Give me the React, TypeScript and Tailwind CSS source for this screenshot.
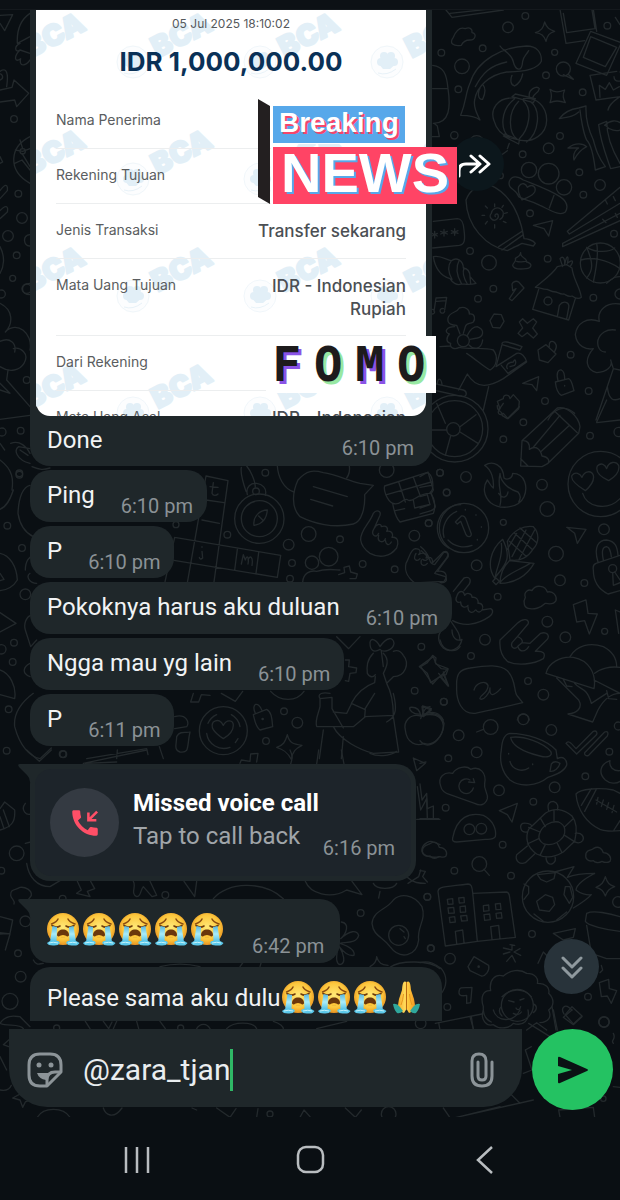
import React from 'react';

interface TextMessage {
  text: string;
  time: string;
}

interface ReceiptRow {
  label: string;
  value: string;
}

const receiptRows: ReceiptRow[] = [
  { label: 'Nama Penerima', value: '' },
  { label: 'Rekening Tujuan', value: '' },
  { label: 'Jenis Transaksi', value: 'Transfer sekarang' },
  { label: 'Mata Uang Tujuan', value: 'IDR - Indonesian Rupiah' },
  { label: 'Dari Rekening', value: '' },
  { label: 'Mata Uang Asal', value: 'IDR - Indonesian' },
];

const messages: TextMessage[] = [
  { text: 'Ping', time: '6:10 pm' },
  { text: 'P', time: '6:10 pm' },
  { text: 'Pokoknya harus aku duluan', time: '6:10 pm' },
  { text: 'Ngga mau yg lain', time: '6:10 pm' },
  { text: 'P', time: '6:11 pm' },
];

interface DoodleTile {
  x: number;
  y: number;
  dots: number[][];
  paths: string[];
}

// Each tile is drawn at 3x and scaled down, so the numbers stay whole.
const doodleTiles: DoodleTile[] = [
  {
    x: 420,
    y: 0,
    dots: [
      [316, 48, 10], [264, 82, 16], [562, 77, 10], [188, 145, 10], [64, 158, 10], [126, 199, 22], [404, 157, 9],
      [378, 226, 10], [430, 207, 21], [115, 268, 10], [488, 277, 10], [103, 406, 11], [170, 430, 23], [420, 408, 10],
      [386, 445, 16], [308, 463, 10], [478, 517, 10], [241, 527, 9], [540, 555, 16], [490, 584, 10], [330, 640, 10],
      [582, 701, 10], [150, 753, 10], [207, 788, 22], [383, 776, 10], [220, 866, 10], [174, 896, 10], [520, 893, 10],
      [452, 1064, 10], [506, 1173, 10], [375, 1203, 10], [327, 510, 23], [386, 521, 31], [432, 562, 23],
      [541, 789, 60], [384, 903, 12], [130, 1022, 18], [600, 882, 15],
    ],
    paths: [
      'M78 30 L96 52 L250 30 M90 40 L240 24',
      'M100 112 C108 92 120 80 136 86 C150 80 158 88 156 98 C172 100 166 120 150 120 C142 120 130 122 124 136 C100 140 86 130 100 112 Z',
      'M374 66 C380 84 388 88 404 94 C388 98 382 106 378 124 C372 106 364 100 346 98 C364 92 370 84 374 66 Z',
      'M420 28 L438 130 L494 122 M520 28 L530 94 M430 40 L440 98 L525 86 L516 30',
      'M512 94 L604 128 L560 226 L468 190 Z M512 110 L590 142 L556 200 L490 172 Z',
      'M510 226 L590 214 M510 226 L528 300 L600 290 M540 292 L538 256 L556 268 L568 248 L580 270 L598 260 M582 230 A14 14 0 1 0 600 216 M564 330 C568 310 586 300 600 290',
      'M586 52 L600 74',
      'M122 346 C140 300 136 280 150 250 C170 180 250 140 320 138 C350 138 366 158 364 184 C350 214 290 216 260 216 C210 224 170 258 164 300 C160 320 170 340 180 360 C166 348 140 346 122 346 Z M240 138 C250 154 276 160 280 186 C286 210 306 220 308 184 C310 170 318 166 326 152 M276 226 C270 240 272 256 284 258 C298 250 306 232 308 222 M180 264 C172 280 174 300 188 298 C196 280 198 266 190 256 M166 260 C188 220 210 196 260 186',
      'M430 224 L460 238 M446 224 L460 238',
      'M390 268 C404 280 420 276 434 270 C426 286 430 296 436 308 C420 302 406 300 390 308 C396 294 396 282 390 268 Z',
      'M284 294 C230 290 210 330 222 362 C232 400 260 414 290 418 C340 434 380 400 380 360 C380 320 350 290 310 296 M284 296 C240 330 240 390 268 412 M296 304 C260 340 268 400 290 416 M310 302 C340 330 326 390 298 416 M330 304 C366 330 356 400 320 426 M276 290 L340 308 L346 296 L286 282 Z M250 408 L296 432 L298 420 L254 402 Z M328 290 C324 268 350 256 358 266 C354 284 340 276 336 300 M268 430 L262 446 M262 452 L210 490',
      'M38 196 C70 200 80 220 84 266 C92 320 90 370 40 370 M38 266 L84 266 M42 370 L52 378 L58 410 L36 410',
      'M418 356 C436 332 460 326 476 324 L498 318 C496 360 506 390 520 420 C528 450 534 470 556 500 L526 510 C520 460 510 430 500 420 C490 400 482 350 480 330 M418 356 C450 350 460 350 476 336 M444 444 C466 426 490 430 500 440 C480 450 470 464 462 480 C458 460 466 450 476 444 L444 444 M536 374 L560 364 C560 400 570 440 600 490 M536 374 C540 420 556 460 572 506 L600 500 M554 376 C570 360 590 360 600 368 M556 376 C570 392 590 394 600 390',
      'M268 544 C276 526 292 528 310 540 C350 556 390 570 420 590 C440 604 446 620 436 636 C420 650 390 630 360 616 C330 600 310 600 296 590 C290 566 262 570 268 544 Z M296 560 C306 544 318 552 322 562 C336 550 350 560 344 576 C336 590 324 590 306 600 C300 590 292 576 296 560 Z M402 586 L388 624',
      'M138 600 C150 568 180 550 208 554 C270 580 300 640 312 716 C320 716 340 720 346 730 L340 738 L306 730 L262 752 C200 740 140 680 138 600 Z M236 740 L306 694 M246 750 L310 704 M280 742 L296 736',
      'M226 650 A5 5 0 1 1 234 644 A12 12 0 1 1 214 640 A18 18 0 1 1 240 658 M224 612 V620 M246 622 L250 616 M254 640 L262 638 M250 664 L258 668 M224 674 V684 M202 664 L196 672 M194 646 L186 646 M202 624 L196 618',
      'M40 664 L112 656 C124 656 130 664 132 690 C136 720 134 734 118 736 L38 744 M44 694 V714 M36 700 L52 708 M36 708 L52 700 M72 688 V708 M62 694 L82 702 M62 702 L82 694 M104 686 V706 M94 692 L114 700 M94 700 L114 692',
      'M340 676 L398 662 L386 708 L372 686 Z',
      'M600 562 L442 694 L448 702 L600 610 M600 640 L428 730 L428 740 L600 662 M556 600 L562 612 M580 590 L586 602 M548 658 L558 668 M586 640 L592 652',
      'M482 780 C510 770 560 776 600 806 M500 742 C530 760 570 756 584 744 M500 834 C520 810 520 790 500 742 M560 850 C580 830 590 830 600 830 M530 730 C536 760 530 800 520 846',
      'M40 770 C60 764 80 780 94 782 C110 770 130 782 130 804 C146 806 150 820 150 830 L168 850 C150 856 136 852 124 852 C110 858 96 846 90 836 C60 828 44 800 40 770 Z M94 782 C80 800 86 820 96 838 M118 780 C104 806 112 830 124 850 M132 804 C126 820 132 836 142 852 M150 830 L152 850',
      'M302 758 C300 776 320 770 320 786 C340 792 334 804 318 806 C300 808 280 806 278 796 C280 786 290 786 286 776 C290 770 300 772 302 758 Z M290 784 C300 788 310 784 318 784',
      'M346 862 C380 834 400 820 412 800 L440 794 L456 804 C460 840 480 860 484 892 C474 900 462 892 456 888 C446 892 440 886 432 882 C420 884 416 878 408 876 C396 876 390 872 382 868 C370 870 360 862 346 862 Z M356 868 L338 928 L446 960 L466 896 M412 950 L418 916 C430 900 450 906 446 924 L440 956 M428 800 L420 776 C430 764 436 780 434 794 M434 794 C440 760 448 768 442 790 C460 776 462 784 450 800',
      'M48 894 L80 892 L74 930 M48 894 L42 934 M50 904 L78 902 M42 930 A7 7 0 1 0 44 936 M70 926 A7 7 0 1 0 74 934',
      'M276 852 A14 14 0 0 1 296 846 L312 864 L276 902 L268 896 L288 866 L278 872 Z',
      'M210 962 L222 942 L244 944 L252 964 L240 984 L218 982 Z',
      'M298 966 L308 956 L322 970 L340 956 L350 966 L338 984 L352 1002 L340 1014 L322 998 L306 1010 L294 1000 L308 984 Z',
      'M84 954 C90 934 110 940 118 924 C136 918 150 930 148 942 C166 940 166 958 160 966 C150 974 140 966 136 980 L130 1000 M84 954 C80 974 100 976 110 976 L120 1002 M104 980 C80 980 70 996 88 1002 C76 1016 80 1028 92 1030 C88 1044 104 1050 118 1042 M142 1006 C150 990 160 980 172 980 C196 990 190 1010 172 1014 L150 1018 M146 1034 C160 1050 184 1050 188 1020 M60 1040 L90 1038 M118 1042 C150 1050 190 1040 220 1050 C236 1070 230 1100 210 1110 C190 1100 170 1080 140 1060',
      'M246 1030 C250 1022 260 1024 306 1040 L300 1050 L246 1034 M246 1034 L228 1100 M228 1100 L290 1060 C304 1056 316 1070 320 1086 L250 1136 C210 1160 170 1170 142 1122 L116 1170 M206 1160 L190 1230 M262 1106 C256 1096 266 1086 280 1086 C286 1070 290 1090 284 1096 L270 1100 M244 1096 L264 1120 L318 1084',
      'M354 1050 L378 1034 L408 1062 L384 1088 L358 1080 Z M388 1040 C386 1020 402 1020 408 1034 C412 1042 406 1050 404 1054',
      'M406 1146 L446 1136 C456 1140 458 1160 462 1172 L424 1186 C412 1180 408 1164 406 1146 Z M414 1142 C408 1120 414 1108 424 1110 C434 1114 434 1130 434 1138 M434 1156 V1158',
      'M308 1150 L356 1130 L350 1172 L336 1154 Z',
      'M232 1204 L250 1196 C250 1182 268 1182 270 1196 L280 1184 L298 1204 L296 1226 L264 1256 L250 1240 C236 1250 230 1236 240 1226 Z',
      'M600 912 C560 906 530 930 538 964 C500 950 470 970 466 1004 C470 1040 500 1050 520 1046 C490 1080 500 1110 530 1118 C560 1116 580 1100 572 1080 L580 1106 L600 1110 M586 990 C560 986 540 1000 534 1020 C530 1040 540 1056 556 1056 M580 1106 L528 1260 M562 1160 C566 1200 580 1204 600 1196',
      'M40 1150 L130 1170 C142 1174 142 1190 128 1190 L40 1170 M52 1150 C54 1130 64 1136 66 1154',
      'M384 1260 C400 1230 430 1210 464 1240',
    ],
  },
  {
    x: 420,
    y: 400,
    dots: [
      [310, 67, 10], [250, 118, 10], [510, 107, 10], [100, 88, 20], [104, 86, 84], [104, 86, 100], [60, 218, 10], [138, 231, 16],
      [80, 278, 10], [366, 254, 16], [382, 327, 22], [26, 370, 10], [250, 367, 9], [552, 388, 16], [132, 384, 74], [408, 461, 22],
      [170, 496, 16], [420, 541, 16], [493, 549, 10], [233, 590, 10], [382, 665, 16], [554, 694, 9], [436, 712, 16],
      [195, 719, 16], [153, 768, 10], [324, 843, 10], [370, 884, 16], [71, 905, 10], [542, 252, 98], [596, 96, 14], [578, 506, 12],
    ],
    paths: [
      'M76 70 L50 10 M120 80 L168 44 M120 96 L174 130 M92 108 L76 166 M80 90 L36 90',
      'M306 122 L412 24 C440 16 476 50 480 80 L476 100 L384 190 L366 200 L302 198 Z M306 122 C322 120 330 130 328 148 C350 134 362 150 366 168 C384 170 390 182 384 190 M338 144 L420 46 M364 154 L446 78 M404 34 L472 98 M302 176 L324 198',
      'M194 196 C220 180 250 196 252 234 C260 240 276 238 278 220 C316 220 324 262 312 290 C296 326 240 330 212 308 C190 288 188 260 202 240 C210 250 214 262 220 264 C222 240 216 210 194 196 Z M240 220 C240 246 270 270 294 276 C306 290 300 300 296 306 M240 222 C230 260 250 280 240 316 M236 280 C250 300 262 290 264 276',
      'M72 412 A66 66 0 0 1 110 334 M84 420 A66 66 0 0 0 156 436 M136 328 V330 M168 344 V346 M184 380 V382 M172 418 V420 M106 366 L124 348 C132 346 136 352 138 358 L154 402 C154 412 142 412 138 404 L122 364 L112 372 Z',
      'M262 424 C280 390 310 376 340 380 C360 400 356 430 340 446 C326 470 300 486 270 480 Z M284 400 L336 448 M268 424 L320 470 M300 384 L350 428 M276 470 L318 390 M296 480 L344 390 M262 448 L290 400 M248 418 C210 450 200 500 224 534 C250 500 280 480 248 418 Z M268 482 L342 490 C320 530 280 550 240 550 C240 520 250 500 268 482 Z M218 544 L228 534 L238 544 L228 554 Z M244 430 C250 470 230 500 226 530 M330 490 C300 510 260 520 240 548',
      'M440 382 L498 388 L472 430 L464 400 Z',
      'M496 272 C470 256 450 240 456 226 C466 214 480 220 486 232 C494 212 514 210 520 226 C524 244 510 260 496 272 Z M566 242 C540 230 526 214 532 198 C544 186 556 194 560 206 C566 184 588 182 596 196 C600 214 586 230 566 242 Z M488 280 C500 320 560 336 600 296',
      'M528 490 L600 466 M520 510 C520 550 540 570 564 582 L600 572 M520 510 C518 498 522 492 528 490 M534 486 C520 440 536 420 560 420 C586 424 592 440 594 466 M550 480 C544 452 548 440 560 440 C570 442 572 456 574 470 M578 518 L580 556 L600 548 M584 516 L600 540',
      'M316 592 C310 576 326 566 336 572 C346 552 376 556 382 576 C400 572 412 588 408 602 C400 616 386 612 376 610 C360 626 340 628 330 626 C312 626 308 606 316 592 Z',
      'M460 614 L498 600 L504 640 L532 642 L508 702 L494 662 L470 666 Z',
      'M2 440 C40 470 20 490 44 494 L72 456 C88 456 88 470 80 476 L52 514 C80 510 84 530 72 544 L0 548 M4 452 L26 472 C26 480 14 484 8 478',
      'M100 574 L132 534 C150 528 154 540 148 552 L132 572 M110 590 C116 570 130 570 134 586 C140 576 156 580 156 592 C170 590 176 600 174 610 C186 608 192 620 186 630 L212 626 C222 630 218 644 208 650 C170 676 130 680 98 662 M110 590 C104 602 112 610 122 606 M122 606 C122 622 136 626 144 616 M144 620 C144 638 158 642 166 630 M168 630 C174 640 182 636 186 630',
      'M240 720 L292 670 C310 652 330 658 324 672 L292 710 C300 712 310 720 306 728 L330 730 L362 700 C380 694 390 706 382 718 L346 754 C370 752 378 760 370 776 C340 794 290 798 262 784 C242 766 238 744 240 720 Z M292 710 L276 728 C270 744 286 750 294 738 L306 728 M294 740 C300 758 316 756 326 740',
      'M96 690 C96 712 110 726 126 718 C120 748 90 760 70 744 C52 726 52 704 66 690',
      'M586 630 L600 636 M586 630 L596 700',
      'M2 800 L22 788 L38 766 L48 774 L46 788 L64 806 L84 808 L78 824 L56 832 L38 852 Z M60 830 L84 858 L72 826',
      'M110 860 C108 820 120 808 150 804 C200 796 240 792 262 812 C290 840 280 876 292 888 L308 908 C260 920 210 930 166 940 C124 944 108 900 110 860 Z M162 870 C168 848 196 840 204 856 C206 880 176 886 180 896 C190 904 210 878 210 864 C208 890 220 890 242 866',
      'M378 820 C384 790 420 768 460 772 C506 780 530 820 522 866 Z M450 770 C470 736 510 726 550 740 C580 756 590 780 590 800 M524 820 C540 806 570 798 600 802 M522 840 L600 880 M410 834 L476 900 C490 924 470 940 444 942 L518 966 L534 930 C550 900 570 880 600 880 M430 838 L440 858 L456 860 M464 850 C480 870 500 860 514 910 L560 880 M560 872 L566 896 L590 898',
      'M6 920 L34 930 L10 950 Z M10 944 C40 930 60 940 70 960 M292 960 A18 18 0 0 1 328 960',
      'M236 30 L250 10 M232 16 C230 40 250 30 246 46 L262 56 L298 20 M530 66 L560 0 M530 68 L600 60',
      'M0 230 L24 216 L40 270 L34 280 L46 320 C40 336 20 334 0 342 M0 262 L34 256 M0 290 L22 284 L30 314 L0 324',
    ],
  },
  {
    x: 420,
    y: 700,
    dots: [
      [310, 58, 16], [116, 106, 16], [212, 81, 22], [394, 90, 16], [170, 157, 16], [85, 175, 10], [568, 155, 10], [496, 229, 10],
      [237, 271, 16], [404, 262, 16], [340, 305, 10], [77, 323, 10], [248, 434, 10], [178, 492, 22], [103, 512, 10], [273, 527, 10],
      [22, 591, 10], [336, 702, 10], [33, 745, 10], [90, 776, 16], [82, 921, 10], [504, 890, 10], [552, 966, 16], [148, 388, 16],
      [184, 386, 16], [384, 590, 77], [292, 916, 48], [595, 78, 12], [594, 606, 16], [176, 800, 2],
    ],
    paths: [
      'M170 96 L190 88 M192 508 L208 526',
      'M4 50 C20 40 60 30 72 70 C70 110 40 140 16 134 C4 130 0 122 0 122 M12 46 L8 18 L34 26 L12 46',
      'M244 150 C246 116 254 102 270 100 C320 100 380 120 408 150 L412 176 C430 166 442 180 440 196 C430 220 400 226 384 232 C350 260 300 262 270 240 C244 216 238 180 244 150 Z M272 112 C310 106 370 128 392 154 C400 170 380 174 360 168 C320 158 276 140 272 112 Z M266 160 V162 M338 192 V194 M270 184 C276 212 310 216 326 204 M394 192 C400 184 410 184 420 190 C416 204 404 216 390 214 Z',
      'M438 130 C444 122 450 124 468 146 L520 94 C530 90 534 100 528 106 L470 162 Z M494 158 L554 96 C564 92 566 100 562 108 L506 166 C498 170 492 164 494 158 Z',
      'M570 182 C540 192 534 220 556 240 C570 252 590 252 600 244 M570 182 C566 200 580 214 600 212',
      'M62 258 C52 230 74 214 98 220 C110 200 140 196 152 208 C180 196 200 220 194 250 C190 270 206 280 202 296 C196 316 180 318 164 310 L90 284 C70 278 64 270 62 258 Z M150 240 A22 22 0 1 0 160 264 M146 246 L164 248 L160 236',
      'M238 332 L292 310 L276 366 L262 344 Z',
      'M98 414 C110 350 150 336 190 346 C220 360 230 390 226 410 C220 420 210 418 196 418 L110 426 C100 426 96 422 98 414 Z',
      'M326 388 L376 340 C400 322 430 326 456 348 C474 370 470 400 464 424 L430 456 C400 474 376 476 350 462 C318 440 316 410 326 388 Z M358 402 C366 376 394 362 416 366 C440 376 436 400 430 410 C414 432 390 436 372 432 C358 424 354 414 358 402 Z M386 332 C380 310 390 304 400 304 C414 308 416 320 412 330 M322 396 C300 400 298 376 308 370 C320 368 332 372 336 378 M466 400 C486 396 494 412 488 422 C480 432 468 428 462 424 M322 438 L290 464 C284 484 300 494 316 488 L344 462 M378 470 C378 490 388 494 396 492 C406 486 408 476 404 468 M362 356 L376 380 M402 330 L402 362 M458 358 L434 380 M462 424 L434 406 M426 458 L412 430 M360 466 L376 434 M322 432 L356 416 M326 382 L360 396',
      'M468 282 C480 266 540 262 580 270 L600 280 M468 282 C472 330 500 370 540 388 C560 396 580 394 600 392 M484 316 L514 266 M494 334 L530 266 M528 300 L590 336 M534 292 L530 312 M550 300 L544 320 M566 308 L560 328 M582 316 L576 338 M582 390 L600 362',
      'M8 446 C14 432 26 436 32 430 C46 420 56 432 58 442 C74 442 84 456 78 468 C70 476 60 468 56 470 C46 478 36 474 30 468 C14 472 4 462 8 446 Z',
      'M498 460 C504 446 516 452 520 446 C536 436 546 446 550 458 C566 458 576 472 570 484 C560 490 550 486 546 484 C536 490 524 488 520 482 C504 486 494 476 498 460 Z',
      'M376 584 L398 592 L404 614 L388 634 L358 630 L350 604 Z M352 524 L406 518 L402 536 L380 546 L362 538 Z M436 560 L432 584 L448 610 L458 592 L450 560 Z M312 552 L326 560 L326 580 L312 598 M342 642 L370 664 M440 636 L410 660 M404 516 L462 500 L442 532 C470 520 500 520 524 520 C500 534 470 550 468 570 C480 580 500 586 514 584 C500 600 480 612 460 624',
      'M556 530 C562 550 568 554 584 560 C568 566 562 572 556 588 C550 572 544 566 528 562 C546 554 550 548 556 530 Z',
      'M76 738 L54 574 C56 560 64 562 144 552 C154 552 156 560 158 578 L172 724 Z M158 580 L260 576 C270 578 268 590 270 600 L286 712 L172 724 M110 730 L106 694 L128 690 L132 728 M216 718 L212 680 L236 676 L240 716 M82 598 L98 596 L99 612 L84 613 Z M116 594 L132 592 L133 608 L118 609 Z M84 624 L101 622 L103 639 L86 640 Z M120 620 L136 618 L137 636 L121 637 Z M88 652 L104 650 L106 666 L90 668 Z M122 648 L140 646 L142 662 L125 663 Z M190 617 L206 615 L207 632 L191 634 Z M226 612 L241 610 L243 628 L228 629 Z M192 644 L209 642 L211 659 L194 661 Z M228 640 L244 638 L246 654 L230 655 Z',
      'M276 734 L276 750 L250 744 M300 746 L282 756 L302 766 M286 786 L276 766 L260 784 M250 762 L270 756 M270 734 L284 736',
      'M144 800 L162 770 L206 796 C210 812 196 830 184 828 L150 812 Z',
      'M118 870 C120 860 130 864 156 862 L152 908 L140 910 L140 886 C120 890 114 884 118 870 Z',
      'M190 920 C180 890 190 870 212 872 C206 840 226 820 250 828 C270 810 300 806 320 820 C346 820 356 836 352 850 C380 850 390 866 386 880 C406 900 400 920 386 930 C396 950 386 966 360 968 M190 920 C188 950 200 960 214 966 M244 920 C236 926 236 940 246 948 M340 912 C352 916 352 930 340 938 M246 890 C270 866 310 862 334 890 M266 902 L282 906 M300 900 L312 896 M288 924 C292 932 300 930 302 920 M280 940 C290 946 300 944 304 936',
      'M500 640 C520 630 570 640 600 650 M500 640 L496 664 C500 676 560 690 600 694 M500 676 L514 760 L560 776 L600 776',
      'M400 700 L466 686 L460 712 L430 720 Z M354 790 L370 756 L384 770 M544 796 L548 810 L540 818',
      'M538 848 L566 838 L568 866 L590 872 L574 910 L562 888 L544 890 Z',
      'M456 920 L486 948 L460 972 L436 944 Z M432 942 C420 922 436 914 446 922 L456 930',
      'M0 252 L6 300 L20 280 L22 326 L40 318 L40 354 M0 356 H56 M0 190 L18 186 M0 512 L16 514 L8 530 L22 546 M0 788 C30 780 50 796 64 806 C84 830 80 860 64 880',
      'M46 970 L186 942 M154 950 L160 990 M60 990 L56 968 M396 920 L408 990 M320 990 L350 968 L380 990',
    ],
  },
  {
    x: 0,
    y: 460,
    dots: [
      [58, 44, 10], [796, 38, 10], [768, 94, 10], [778, 176, 74], [778, 176, 54], [1160, 30, 22], [1320, 38, 10], [1340, 97, 10],
      [22, 197, 10], [682, 224, 10], [926, 222, 22], [866, 254, 16], [1020, 238, 10], [1243, 227, 16], [1286, 189, 10],
      [66, 264, 10], [876, 309, 10], [986, 290, 28], [936, 308, 20], [1088, 312, 10], [1184, 328, 10], [76, 403, 16],
      [528, 194, 9], [870, 356, 10], [42, 548, 10], [38, 606, 10], [26, 748, 10], [4, 568, 14], [1264, 560, 10], [1244, 692, 10],
      [1332, 725, 10], [670, 812, 72], [852, 754, 10], [892, 788, 16], [798, 843, 10], [190, 883, 10], [20, 872, 10], [788, 777, 2],
    ],
    paths: [
      'M618 48 L684 62 L640 380 M618 48 L560 380 M618 120 L672 128 M606 180 L658 190 M524 232 L842 286 L832 352 L490 296 M524 232 L494 370 M712 268 L704 330 M776 278 L768 340 M640 68 L636 100 C640 110 650 106 654 102 M630 80 L654 82 M606 260 V262 M606 274 L608 294 C602 300 598 296 598 292 M724 312 L730 284 L736 300 C740 284 748 290 744 312 M744 300 C750 284 760 290 756 316',
      'M738 94 C730 70 720 40 724 22 M766 82 C766 60 750 30 740 18 M742 104 C736 80 754 68 770 70 C786 72 802 84 796 106 M762 196 C758 170 780 150 802 150 C800 176 790 192 762 196 Z M776 168 L788 180',
      'M894 60 C920 30 940 30 970 38 C1010 44 1040 60 1080 70 L1120 76 L1094 104 C1096 140 1086 186 1060 192 C1000 206 940 190 900 170 C870 140 880 90 894 60 Z M940 80 L1042 110 M932 118 L998 138',
      'M832 18 C834 50 850 86 882 96 M1040 54 C1050 40 1050 30 1048 18',
      'M1154 78 L1280 38 C1300 40 1304 90 1290 98 C1310 120 1304 150 1300 160 L1200 186 C1184 170 1180 140 1178 130 C1160 120 1150 90 1154 78 Z M1160 104 L1294 66 M1196 66 L1216 126 M1240 52 L1260 106 M1180 130 C1200 140 1210 110 1224 120 C1240 130 1250 100 1290 100 M1186 152 L1214 146 M1240 120 L1244 144 L1286 134',
      'M1382 134 A70 70 0 0 0 1346 264',
      'M1082 240 C1080 210 1110 190 1120 160 C1130 146 1144 154 1140 166 L1122 206 C1130 190 1144 190 1144 200 C1160 194 1166 206 1160 214 C1178 210 1180 226 1176 232 C1196 230 1196 250 1190 264 C1170 290 1140 296 1110 280 C1090 266 1084 256 1082 240 Z M1122 206 C1110 226 1130 236 1136 220 M1136 226 C1130 246 1150 252 1156 236 M1156 240 C1158 256 1168 258 1174 246',
      'M1218 310 C1230 290 1230 270 1246 266 C1264 266 1262 280 1256 284 C1270 274 1284 282 1278 294 C1296 288 1300 300 1296 310 L1330 276 C1344 270 1348 284 1340 294 L1304 340 L1336 350 C1344 362 1336 370 1320 368 M1218 310 C1212 334 1226 356 1246 370 M1248 280 C1236 300 1252 306 1260 296 M1264 300 C1260 318 1274 320 1282 310',
      'M908 366 C910 340 930 330 950 334 C980 324 1010 330 1020 330 M1016 344 L1034 338 L1032 322 L1048 318 L1052 336 L1072 342 L1068 356 L1050 356',
      'M40 90 C30 120 20 140 0 148 M0 0 C40 30 40 60 36 90 M54 160 C56 110 70 80 90 76 M54 160 C60 200 80 220 100 230 M76 330 C76 300 90 290 96 290 M90 340 C76 350 90 370 110 370',
      'M0 280 C30 286 50 320 52 360 C40 380 20 390 0 392 M0 340 L12 358 L0 362 M0 458 L48 490 L0 516 M0 630 C30 640 50 680 44 716 L0 704 M76 510 C70 490 80 470 92 466 M76 510 L92 560 L110 540 M90 610 C70 620 64 640 90 650 M100 700 C60 730 40 760 44 800 C60 860 90 890 120 896 L154 864',
      'M1120 580 C1100 600 1100 620 1102 640 C1112 656 1120 650 1126 644 M1110 548 C1112 530 1130 540 1140 560 C1160 530 1180 530 1182 550 C1180 570 1150 580 1140 568 C1120 580 1110 570 1110 548 Z M1150 580 C1170 600 1160 620 1150 640 L1160 670 L1180 650 C1216 650 1230 610 1210 586 C1200 570 1190 570 1180 574 M1144 574 L1150 620 M1126 650 L1124 668 C1090 680 1070 700 1054 730 L1094 748 L1124 700 M1160 670 C1176 700 1180 730 1180 766 L1094 770 L1096 748 M1054 732 L1040 760 L1000 756 M1096 770 L1060 800 L950 800 C944 780 956 760 960 740 L960 716 L996 712 L996 746 L1030 804 M960 716 C950 700 970 696 990 700 M1180 700 C1190 740 1192 770 1160 786 M1000 800 C1020 840 1080 870 1120 880 L1196 876 L1180 770 M970 810 L958 896 M1030 830 L1024 896',
      'M1258 620 L1300 590 L1308 612 L1344 626 L1320 650 L1292 668 L1282 640 Z M1316 640 L1346 678 L1330 636',
      'M1262 768 C1230 760 1210 784 1216 810 C1220 850 1250 860 1272 850 C1300 860 1330 830 1330 796 C1326 764 1296 758 1262 768 Z M1262 776 C1270 750 1280 740 1290 740 M1260 762 C1240 764 1226 750 1230 742 C1250 740 1260 750 1262 768',
      'M670 836 C640 816 630 800 640 786 C654 776 664 784 670 796 C680 776 700 780 700 796 C700 816 684 828 670 836 Z M624 790 A52 52 0 0 1 650 764 M694 764 A52 52 0 0 1 720 800 M620 820 A52 52 0 0 0 690 862 M714 836 L706 848',
      'M760 764 L800 748 C816 756 816 780 818 800 L780 810 C766 800 764 780 760 764 Z M766 760 C752 730 776 722 786 752',
      'M862 824 C868 850 880 852 906 856 C886 866 878 874 874 898 C862 876 850 868 830 862 C850 856 856 846 862 824 Z',
      'M524 770 C560 760 570 790 560 800 L524 806 M530 830 C540 810 560 820 570 816 C560 860 570 880 540 876 C520 870 530 850 530 830 M478 860 L490 896 M260 896 L440 866 L444 884 M350 896 L352 870',
      'M580 700 L572 726 L596 726 L604 704 L630 706 M664 700 L706 724 L728 694 M812 694 C840 726 890 726 912 694 M1010 530 L1046 566 L1080 530 M1036 600 L1048 600 L1046 620 L1070 624 L1068 638 L1050 640 L1046 664 L1036 662 M1320 540 C1330 580 1370 576 1380 560 M1350 480 C1370 510 1380 520 1380 540',
    ],
  },
  {
    x: 0,
    y: 750,
    dots: [
      [188, 12, 10], [50, 310, 22], [4, 362, 10], [62, 680, 16], [30, 754, 24], [54, 610, 10], [496, 435, 10], [188, 446, 10],
      [1082, 489, 10], [1282, 440, 10], [1292, 595, 10], [1196, 556, 30], [76, 514, 16],
    ],
    paths: [
      'M80 0 L118 34 L154 0 M250 40 L440 0 M256 40 L350 36 M720 40 L724 30 L750 34 L752 12 L774 10 L770 36 M870 0 C880 20 876 30 872 42 M956 0 L950 42 M1024 0 L1032 42 M1110 10 C1130 20 1170 20 1190 4 M1240 24 L1276 40 L1250 62 Z',
      'M1252 110 L1262 180 L1280 146 L1282 204 M1250 208 H1320 M1266 296 C1270 280 1290 270 1300 276 L1320 284 M1266 296 C1262 316 1290 326 1320 320',
      'M0 240 C40 230 46 210 44 180 L14 156 L0 176 M10 180 L28 230 M0 200 L12 236 M76 160 C60 180 80 200 96 190 M80 340 C86 380 110 410 150 410 L180 392 M76 280 L92 276',
      'M32 436 C30 416 50 420 60 412 C76 410 96 420 94 436 C90 444 84 448 80 456 M32 436 C34 448 46 450 42 462',
      'M232 394 L244 420 L230 430 L270 440 L262 424 L284 416 L272 394 M400 394 C410 410 390 430 410 440 C424 440 420 420 430 410 L456 440 L470 436 L450 394 M552 394 L584 440 L590 394 M640 446 C680 396 790 390 850 446',
      'M916 394 C930 430 990 450 1040 420 L1086 434 L1056 394 M1120 400 C1130 420 1180 420 1190 400 M1140 424 L1136 444 M1220 380 C1240 400 1260 400 1276 400 M1224 400 L1256 380 L1262 360',
      'M1180 450 C1200 430 1240 430 1266 470 C1280 510 1250 530 1256 570 C1250 620 1200 630 1170 590 C1150 560 1120 560 1116 520 C1120 480 1160 480 1180 450 Z M1200 536 L1212 546 M1212 560 L1216 566',
      'M1024 516 C1050 520 1040 550 1022 566 C1050 540 1070 540 1076 556 C1070 580 1040 576 1020 580 C1050 590 1066 600 1062 616 C1040 620 1026 600 1018 590 C1030 610 1040 640 1020 644 C1006 640 1010 620 1012 600',
      'M1130 620 C1136 640 1144 644 1164 646 M1130 620 C1130 636 1120 644 1110 650 M1170 652 C1200 630 1290 630 1320 656',
      'M0 500 L38 510 L30 550 L0 552 M0 548 L30 552 L16 600 M0 820 C20 790 50 800 60 800 L90 830 M100 630 C110 650 120 640 130 640 M480 650 C520 640 560 640 600 650 M720 650 L730 636 M780 650 L784 636',
    ],
  },
  {
    x: 0,
    y: 0,
    dots: [
      [42, 357, 10], [55, 581, 10], [66, 654, 16], [24, 708, 16], [50, 766, 10], [38, 835, 9], [80, 866, 14], [80, 1140, 10],
      [62, 1292, 10], [6, 1296, 12], [58, 1420, 10], [4, 882, 12], [68, 454, 8],
    ],
    paths: [
      'M0 46 L38 44 L14 92 L0 70 M90 40 C60 60 50 90 52 130 L90 110 M60 130 C40 140 46 160 60 150 C40 170 44 190 62 176 C56 200 76 200 90 180 M60 150 L90 160',
      'M0 214 C20 200 26 220 20 260 M0 270 L36 262 L42 240 L86 280 L50 320 L44 300 L0 306 M0 240 C14 236 6 220 0 222',
      'M90 410 C30 440 20 510 90 550 M46 450 L68 454 L90 446 M66 460 L90 500 M60 420 L68 446 M44 490 L66 480 L90 510',
      'M0 572 C16 550 24 552 22 572 L0 596 M0 632 C16 614 26 616 22 636 L0 656 M0 470 L8 486 L0 490 M90 704 C66 704 70 740 90 738 M0 740 C16 770 12 800 0 820',
      'M90 850 C60 850 60 884 90 884 M0 910 C40 930 40 970 16 996 C50 960 100 1000 90 1050 M0 1024 C30 1010 50 1030 44 1056 M0 1100 C30 1120 60 1110 72 1090 C90 1060 60 1040 40 1046 M24 1110 L20 1140 L90 1220 M0 1170 L30 1180 L0 1150 M0 1258 L90 1246 M32 1330 C60 1320 80 1340 90 1360 M90 1390 C50 1380 40 1350 56 1340 L90 1346 M60 1350 L84 1366 M96 1400 C120 1410 130 1410 150 1404 M0 1330 L14 1350',
    ],
  },
  {
    x: 0,
    y: 1010,
    dots: [[170, 54, 9], [542, 54, 9], [810, 312, 9], [1262, 40, 16], [1812, 36, 15], [1166, 312, 22], [1810, 266, 8]],
    paths: [
      'M0 40 C20 50 60 40 70 56 M26 90 L10 104 L26 110 M0 140 L20 180 M0 240 C20 244 30 236 34 226 M60 230 L64 250 L38 264 L60 270 L68 292 L76 276 L92 270 M112 322 C130 290 190 290 210 322 M310 294 C316 314 340 330 366 294 M576 294 L590 300 M650 294 L690 322 L708 296 M770 322 L774 296 M900 322 L912 300 L930 320',
      'M256 34 L270 56 M310 34 L326 56 L336 36 M340 56 L350 34 M410 34 L416 56 M480 34 L496 56 M590 56 C600 40 620 38 630 56 M680 56 C700 34 760 34 770 56 M820 34 C840 40 850 50 850 56 M950 56 L1040 34 M1036 294 L1066 322 L1084 300 M1330 294 L1352 326 L1600 270 M1370 322 L1500 290 M1520 240 L1560 280',
      'M1410 20 L1420 56 M1450 0 C1440 30 1460 50 1480 44 C1500 60 1530 54 1540 40 C1570 50 1590 30 1584 0 M1480 0 C1490 36 1540 40 1560 0 M1586 40 L1650 80 M1660 0 L1672 60 M1690 22 L1716 0 M1690 22 L1720 44 L1746 20 M1576 120 L1596 180 L1570 190 M1576 120 L1594 110 M1840 70 C1850 90 1830 90 1840 100 M1840 230 L1860 232 M1680 322 L1676 300 L1780 292 L1784 322',
    ],
  },
];

function Wallpaper() {
  return (
    <svg
      className="absolute inset-x-0 top-[9px] -z-10 h-[1108px] w-full"
      viewBox="0 9 620 1108"
      preserveAspectRatio="xMidYMin slice"
      fill="none"
      stroke="#23292c"
      strokeWidth="4"
      strokeLinecap="round"
      strokeLinejoin="round"
      aria-hidden="true"
    >
      {doodleTiles.map((tile, tileIdx) => (
        <g key={tileIdx} transform={`translate(${tile.x} ${tile.y}) scale(0.33333)`}>
          {tile.dots.map(([cx, cy, r], idx) => (
            <circle key={idx} cx={cx} cy={cy} r={r} />
          ))}
          {tile.paths.map((d, idx) => (
            <path key={idx} d={d} />
          ))}
        </g>
      ))}
    </svg>
  );
}

function EmojiDefs() {
  return (
    <svg className="absolute h-0 w-0" aria-hidden="true">
      <defs>
        <radialGradient id="face" cx="50%" cy="45%" r="55%">
          <stop offset="0" stopColor="#ffe978" />
          <stop offset="0.7" stopColor="#fcc63c" />
          <stop offset="1" stopColor="#e89322" />
        </radialGradient>
        <linearGradient id="tear" x1="0" y1="0" x2="0" y2="1">
          <stop offset="0" stopColor="#58b6dc" />
          <stop offset="0.5" stopColor="#a9ecfa" />
          <stop offset="1" stopColor="#4fbfe6" />
        </linearGradient>
        <linearGradient id="hands" x1="0" y1="0" x2="1" y2="0">
          <stop offset="0" stopColor="#f4a21f" />
          <stop offset="0.4" stopColor="#ffd95a" />
          <stop offset="0.6" stopColor="#ffc83d" />
          <stop offset="1" stopColor="#ef8f1c" />
        </linearGradient>
      </defs>
    </svg>
  );
}

function SobEmoji() {
  return (
    <svg className="h-9 w-9 shrink-0" viewBox="0 0 36 36" role="img" aria-label="loudly crying face">
      <circle cx="17" cy="17" r="16" fill="url(#face)" />
      <path d="M5.5 12 C8 11 11 9.5 12 7 M29 12 C26 11 23 9.5 22 7" stroke="#8a4b10" strokeWidth="1.5" fill="none" strokeLinecap="round" />
      <path d="M6 13.5 Q10 16.5 14 14 M20 14 Q24 16.5 28 13.5" stroke="#6d3a0c" strokeWidth="1.6" fill="none" strokeLinecap="round" />
      <path d="M11 23 C11 15.5 23 15.5 23 23 C23 26 11 26 11 23 Z" fill="#6b370c" />
      <path d="M12.5 24.5 Q17 21.5 21.5 24.5 Q17 27 12.5 24.5 Z" fill="#ffc73b" />
      <path d="M6.5 14 L11 15 L10.5 30 L4 30 Z M27.5 14 L23 15 L23.5 30 L30 30 Z" fill="url(#tear)" />
      <path d="M1 31 Q4 28 9 29 Q13 28 14 31 Q12 34 7 33.5 Q2 33.5 1 31 Z M20 31 Q21 28 25 29 Q30 28 33.5 31 Q32 34 27 33.5 Q22 34 20 31 Z" fill="#5cc8ea" />
      <path d="M3 31 Q7 29.5 12 31 M22 31 Q27 29.5 31 31" stroke="#c4f3fb" strokeWidth="1" fill="none" />
    </svg>
  );
}

function PrayEmoji() {
  return (
    <svg className="h-9 w-9 shrink-0" viewBox="0 0 36 36" role="img" aria-label="folded hands">
      <path d="M17.5 2 C14 0 13.5 4 13 10 L10 19 C9 24 9 27 8 30 L15 33 L17.5 29 L20 33 L27 30 C26 27 26 24 25 19 L22 10 C21.5 4 21 0 17.5 2 Z" fill="url(#hands)" />
      <path d="M17.5 2 V29" stroke="#b86a12" strokeWidth="1" />
      <path d="M14.5 14 Q14 20 12 25 M20.5 14 Q21 20 23 25" stroke="#e8971f" strokeWidth="1" fill="none" />
      <path d="M4 24 Q8 23 11 27 L14 31 Q11 34 8 33 Q5 30 4 24 Z M31 24 Q27 23 24 27 L21 31 Q24 34 27 33 Q30 30 31 24 Z" fill="#2fa79c" />
    </svg>
  );
}

// Faint bank branding repeated behind the receipt
function Watermark() {
  return (
    <svg className="absolute inset-0 -z-10 h-full w-full" aria-hidden="true">
      {[0, 1, 2, 3].map((row) =>
        [0, 1, 2, 3].map((col) => (
          <g key={`${row}-${col}`} transform={`translate(${18 + col * 127} ${24 + row * 117})`}>
            <text
              transform="rotate(-27)"
              textAnchor="middle"
              y="11"
              className="font-['Inter'] text-[29px] font-black"
              fill="#e2eff7"
              stroke="#e2eff7"
              strokeWidth="2"
              strokeLinejoin="round"
            >
              BCA
            </text>
            <g transform="translate(-48 28)">
              <circle r="16" fill="#fcfdfe" stroke="#f0f6fa" />
              <circle cx="-6" cy="0" r="4" fill="#e2eff7" />
              <circle cx="-3" cy="-6" r="4" fill="#e2eff7" />
              <circle cx="4" cy="-6" r="4" fill="#e2eff7" />
              <circle cx="7" cy="0" r="4" fill="#e2eff7" />
              <path d="M-9 1 L10 1 L3 7 L-4 7 Z M-4 -5 H5 V3 H-4 Z" fill="#e2eff7" />
              <path d="M-9 11 Q0 14 9 7" stroke="#e8f2f8" fill="none" />
            </g>
          </g>
        ))
      )}
    </svg>
  );
}

function Receipt() {
  return (
    <div className="relative isolate h-[406px] overflow-hidden rounded-b-[14px] bg-white px-5 font-['Inter',sans-serif]">
      <Watermark />
      <p className="pt-1 text-center text-xs leading-5 text-[#55595c]">05 Jul 2025 18:10:02</p>
      <p className="mt-3 mb-4 text-center text-[26px] leading-8 font-bold text-[#0a3157]">IDR 1,000,000.00</p>
      <dl>
        {receiptRows.map((row) => (
          <div key={row.label} className="flex min-h-[55px] justify-between border-b border-[#eceeef] pt-4 pb-[14px]">
            <dt className="text-sm leading-5 text-[#5a5d60]">{row.label}</dt>
            <dd className="w-[150px] text-right text-[17px] leading-[23px] font-medium text-[#4b4f54]">{row.value}</dd>
          </div>
        ))}
      </dl>
    </div>
  );
}

function BreakingNewsSticker() {
  return (
    <div className="absolute top-[89px] left-[228px] flex" aria-label="Breaking news sticker">
      <svg className="h-[106px] w-[13px]" viewBox="0 0 13 106" aria-hidden="true">
        <path d="M0 0 L12 7 V105 L0 98 Z" fill="#231f20" />
      </svg>
      <div className="flex flex-col items-start gap-[3px] border-l-2 border-white pt-[7px] font-['Liberation_Sans',sans-serif] font-bold text-white">
        <span className="border-b border-white bg-[#57a8ea] px-[6px] pb-1 text-[28px] leading-[33px] [text-shadow:2px_2px_0_#f5466a]">
          Breaking
        </span>
        <span className="bg-[#ff4465] px-2 pb-[6px] text-[56px] leading-[51px] [text-shadow:2px_2px_0_#57a8ea]">
          NEWS
        </span>
      </div>
    </div>
  );
}

function FomoSticker() {
  return (
    <div className="absolute top-[326px] left-[236px] flex h-[57px] w-[170px] items-center justify-around bg-white pr-1 font-['DejaVu_Sans_Mono',monospace] text-5xl leading-[57px] font-bold text-[#1d1b1c]">
      <span className="[text-shadow:3px_3px_0_#8a53e6]">F</span>
      <span className="[text-shadow:3px_3px_0_#98e8a2]">O</span>
      <span className="[text-shadow:3px_3px_0_#8a53e6]">M</span>
      <span className="[text-shadow:3px_3px_0_#98e8a2]">O</span>
    </div>
  );
}

function BubbleTail() {
  return (
    <svg className="absolute top-0 -left-3 h-[18px] w-[34px]" viewBox="0 0 34 18" aria-hidden="true">
      <path d="M2 0 H34 V18 H12 Q12 14 9 11 L1 3 Q-1 0 2 0 Z" fill="#1f272a" />
    </svg>
  );
}

const Time: React.FC<{ value: string }> = ({ value }) => (
  <time className="shrink-0 text-xl leading-6 text-[#8b9296]">{value}</time>
);

function Composer() {
  return (
    <form className="flex items-start justify-between pr-[7px] pl-[9px]" onSubmit={(e) => e.preventDefault()}>
      <div className="mr-[10px] flex h-[78px] flex-1 items-center rounded-b-[38px] bg-[#1f272a] px-[18px] pt-1">
        <button type="button" aria-label="Stickers">
          <svg className="h-9 w-9" viewBox="0 0 36 36" fill="none" stroke="#8c9498" strokeWidth="3" strokeLinejoin="round">
            <path d="M13 2 H23 Q34 2 34 13 V20 L20 34 H13 Q2 34 2 23 V13 Q2 2 13 2 Z" />
            <path d="M34 20 H28 Q20 20 20 28 V34" />
            <circle cx="12" cy="13" r="2.5" fill="#8c9498" stroke="none" />
            <circle cx="24" cy="13" r="2.5" fill="#8c9498" stroke="none" />
            <path d="M10 21 H24 L19 28 Q12 27 10 21 Z" fill="#8c9498" stroke="none" />
          </svg>
        </button>
        <input
          aria-label="Message"
          defaultValue="@zara_tjan"
          className="ml-5 field-sizing-content bg-transparent text-3xl leading-10 text-[#e9edef] outline-none"
        />
        <span className="h-[42px] w-[3px] bg-[#2fb866]" />
        <button type="button" aria-label="Attach file" className="ml-auto pr-[10px]">
          <svg className="h-9 w-6" viewBox="0 0 24 36" fill="none" stroke="#8c9498" strokeWidth="3" strokeLinecap="round">
            <path d="M22 10 V24 Q22 34 12 34 Q2 34 2 24 V9 Q2 2 9 2 Q16 2 16 9 V24 Q16 28 12 28 Q8 28 8 24 V10" />
          </svg>
        </button>
      </div>
      <button type="submit" aria-label="Send" className="flex h-[81px] w-[81px] items-center justify-center rounded-full bg-[#24c262]">
        <svg className="h-8 w-9" viewBox="0 0 36 32" aria-hidden="true">
          <path d="M3 4 Q3 2 5 3 L32 15 Q34 16 32 17 L5 29 Q3 30 3 28 V20 L17 16 L3 12 Z" fill="#0b1214" />
        </svg>
      </button>
    </form>
  );
}

function NavigationBar() {
  return (
    <nav className="mt-[7px] flex h-[83px] justify-center bg-[#0a0f13] pt-6" aria-label="System navigation">
      <div className="flex w-full items-start justify-between px-[118px]">
        <button type="button" aria-label="Recent apps">
          <svg className="h-9 w-9" viewBox="0 0 36 36" stroke="#b9bdc0" strokeWidth="2.5">
            <path d="M8 6 V32 M19 6 V32 M30 6 V32" />
          </svg>
        </button>
        <button type="button" aria-label="Home">
          <svg className="h-9 w-9" viewBox="0 0 36 36" fill="none" stroke="#b9bdc0" strokeWidth="2.5">
            <rect x="6" y="6" width="25" height="25" rx="8" />
          </svg>
        </button>
        <button type="button" aria-label="Back">
          <svg className="h-9 w-9" viewBox="0 0 36 36" fill="none" stroke="#b9bdc0" strokeWidth="2.5">
            <path d="M26 6 L12 19 L26 32" />
          </svg>
        </button>
      </div>
    </nav>
  );
}

export default function App() {
  return (
    <div className="relative isolate min-h-screen overflow-hidden bg-[#0a0f13] font-['Roboto',sans-serif]">
      <Wallpaper />
      <EmojiDefs />
      <div className="h-[10px] border-b border-[#14191d] bg-[#0c1115]" />

      <main className="flex flex-col items-start gap-1 pl-[30px]">
        <div className="relative flex items-start gap-[18px]">
          <div className="w-[402px] rounded-b-[20px] bg-[#1f272a] px-[6px]">
            <Receipt />
            <div className="flex h-[50px] items-start justify-between pr-3 pl-[11px] pt-2">
              <p className="text-2xl leading-8 text-[#f1f3f4]">Done</p>
              <div className="pt-3">
                <Time value="6:10 pm" />
              </div>
            </div>
          </div>
          <button type="button" aria-label="Forward" className="mt-[127px] flex h-[54px] w-[54px] items-center justify-center rounded-full bg-[#0c171c]">
            <svg className="h-9 w-9" viewBox="0 0 36 36" fill="none" stroke="#ffffff" strokeWidth="3" strokeLinecap="round" strokeLinejoin="round">
              <path d="M0 30 V25 Q0 18 7 18 H20 M12 10 L21 18 L12 26 M21 10 L30 18 L21 26" />
            </svg>
          </button>
          <BreakingNewsSticker />
          <FomoSticker />
        </div>

        {messages.map((message, idx) => (
          <div key={idx} className="flex h-[52px] items-start gap-[26px] rounded-[20px] bg-[#1f272a] pt-[9px] pr-[14px] pl-[17px]">
            <p className="text-2xl leading-8 text-[#f1f3f4]">{message.text}</p>
            <div className="pt-[15px]">
              <Time value={message.time} />
            </div>
          </div>
        ))}

        <button type="button" className="relative mt-[14px] rounded-[20px] bg-[#1f272a] p-[5px] text-left">
          <BubbleTail />
          <span className="relative flex h-[107px] items-start rounded-2xl bg-[#1d242a] pt-[19px] pr-4 pl-[15px]">
            <span className="mr-[14px] flex h-[69px] w-[69px] items-center justify-center rounded-full bg-[#343a42]">
              <svg className="h-[34px] w-[34px]" viewBox="0 0 24 24" fill="#ff4f67" aria-hidden="true">
                <path d="M20.01 15.38c-1.23 0-2.42-.2-3.53-.56a.977.977 0 0 0-1.01.24l-1.57 1.97c-2.83-1.35-5.48-3.9-6.89-6.83l1.95-1.66c.27-.28.35-.67.24-1.02-.37-1.11-.56-2.3-.56-3.53 0-.54-.45-.99-.99-.99H4.19C3.65 3 3 3.24 3 3.99 3 13.28 10.73 21 20.01 21c.71 0 .99-.63.99-1.18v-3.45c0-.54-.45-.99-.99-.99z" />
                <path d="M13.5 4.5 V11 H20 V9.2 H16.6 L21.2 4.6 L19.9 3.3 L15.3 7.9 V4.5 Z" />
              </svg>
            </span>
            <span className="flex flex-col">
              <span className="text-2xl leading-[30px] font-bold text-white">Missed voice call</span>
              <span className="text-2xl leading-9 text-[#a0a5a9]">Tap to call back</span>
            </span>
            <span className="pt-12 pl-1">
              <Time value="6:16 pm" />
            </span>
          </span>
        </button>

        <div className="relative mt-[14px] flex h-[64px] items-start gap-[26px] rounded-[20px] bg-[#1f272a] pt-[13px] pr-4 pl-4">
          <BubbleTail />
          <p className="relative flex">
            <SobEmoji />
            <SobEmoji />
            <SobEmoji />
            <SobEmoji />
            <SobEmoji />
          </p>
          <div className="pt-[22px]">
            <Time value="6:42 pm" />
          </div>
        </div>

        <div className="flex h-[54px] items-start rounded-t-[20px] bg-[#1f272a] pt-[13px] pr-[17px] pl-[17px]">
          <p className="flex text-2xl leading-9 text-[#f1f3f4]">
            Please sama aku dulu
            <SobEmoji />
            <SobEmoji />
            <SobEmoji />
            <PrayEmoji />
          </p>
        </div>
      </main>

      <button
        type="button"
        aria-label="Scroll to latest"
        className="absolute top-[939px] right-[21px] flex h-[55px] w-[55px] items-center justify-center rounded-full bg-[#28333a]"
      >
        <svg className="h-6 w-6" viewBox="0 0 24 24" fill="none" stroke="#8f999e" strokeWidth="3" strokeLinecap="round" strokeLinejoin="round">
          <path d="M3 3 L12 12 L21 3 M3 13 L12 22 L21 13" />
        </svg>
      </button>

      <div className="pt-2">
        <Composer />
        <NavigationBar />
      </div>
    </div>
  );
}
